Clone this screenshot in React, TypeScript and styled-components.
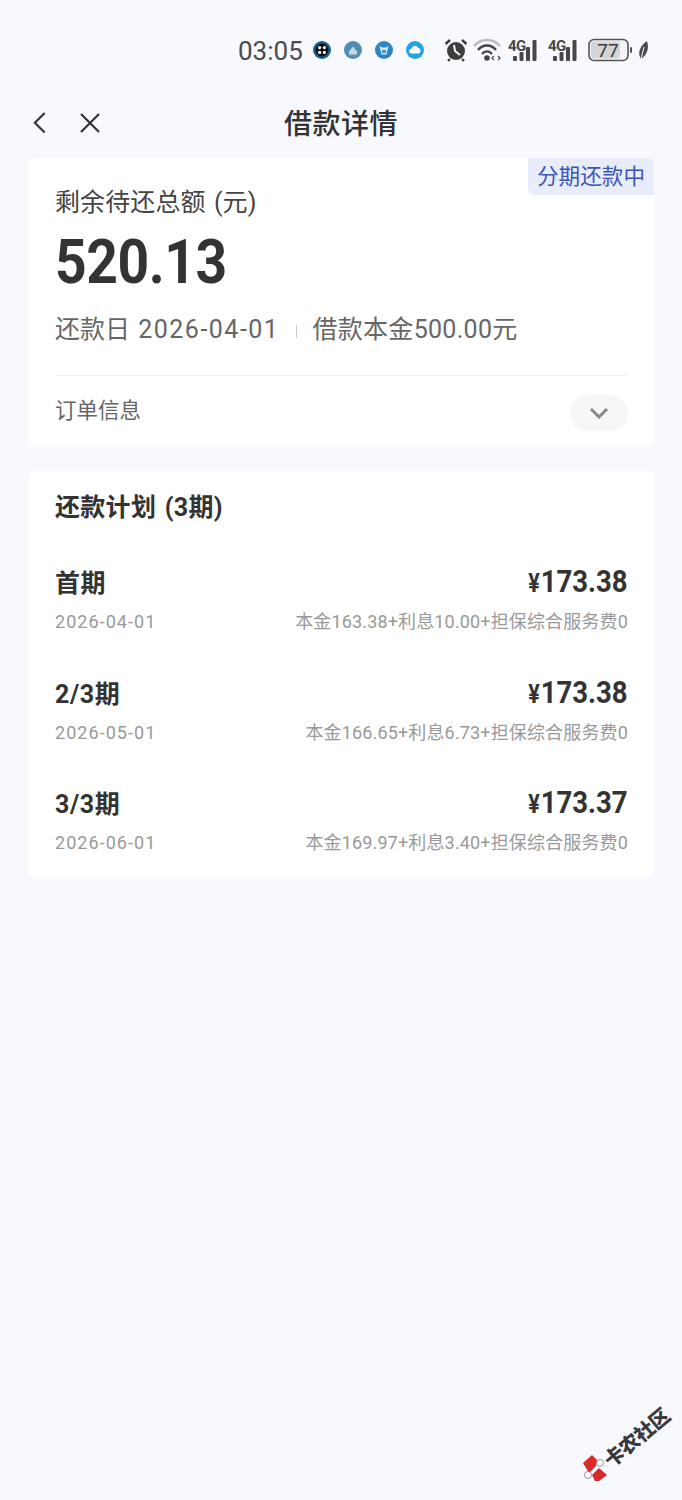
import React from "react";
import styled, { createGlobalStyle } from "styled-components";

const Global = createGlobalStyle`
  html, body { margin: 0; padding: 0; background: #f8f9fe; }
  body { font-family: Roboto, "Noto Sans CJK SC", sans-serif; }
`;

const Page = styled.div`
  position: relative;
  width: 682px;
  height: 1500px;
  overflow: hidden;
  background: #f8f9fe;
  display: flex;
  flex-direction: column;
`;

const StatusBar = styled.div`
  height: 96px;
  box-sizing: border-box;
  padding: 36px 34px 0 238px;
  display: flex;
  align-items: flex-start;
  color: #444;
`;
const Time = styled.span`
  font-size: 26px;
  line-height: 30px;
  color: #4a4a4c;
  width: 75px;
`;
const AppDots = styled.div`
  display: flex;
  gap: 13px;
  margin-top: 5px;
`;
const Spacer = styled.div`
  flex: 1;
`;
const SysIcons = styled.div`
  display: flex;
  align-items: center;
  gap: 5px;
  margin-top: -2px;
`;

const NavBar = styled.div`
  height: 58px;
  padding: 0 28px;
  margin-bottom: 4px;
  display: grid;
  grid-template-columns: 1fr auto 1fr;
  align-items: center;
`;
const NavIcons = styled.div`
  display: flex;
  align-items: center;
  gap: 26px;
  margin-top: -4px;
`;
const Title = styled.h1`
  margin: -6px 0 0;
  font-size: 28px;
  font-weight: 500;
  color: #333;
  letter-spacing: 0.5px;
`;

const Card = styled.section`
  position: relative;
  margin: 0 28px;
  background: #fff;
  border-radius: 6px;
  padding: 0 26px 0 27px;
`;
const SummaryCard = styled(Card)`
  height: 289px;
  box-sizing: border-box;
  padding-top: 29px;
  margin-bottom: 24px;
`;
const PlanCard = styled(Card)`
  height: 406px;
  box-sizing: border-box;
  padding-top: 20px;
`;
const Badge = styled.div`
  position: absolute;
  top: 0;
  right: 0;
  width: 126px;
  height: 37px;
  background: #e9edfb;
  color: #3f55b5;
  font-size: 21.6px;
  line-height: 37px;
  text-align: center;
  border-radius: 0 6px 0 6px;
`;
const Label = styled.div`
  font-size: 25px;
  line-height: 32px;
  color: #444;
  word-spacing: 2px;
  letter-spacing: 0.1px;
`;
const Amount = styled.div`
  font-size: 61px;
  line-height: 70px;
  font-weight: 700;
  color: #333;
  margin-top: 8px;
  letter-spacing: -0.5px;
  transform: scaleX(0.905);
  transform-origin: left center;
`;
const MetaRow = styled.div`
  display: flex;
  align-items: center;
  margin-top: 16px;
  font-size: 25px;
  line-height: 34px;
  color: #666;
`;
const MetaDate = styled.span`
  word-spacing: 2px;
`;
const MetaDigits = styled.span`
  letter-spacing: 1.5px;
`;
const MetaPrincipal = styled.span`
  letter-spacing: 0.3px;
`;
const MetaDivider = styled.span`
  width: 1px;
  height: 13px;
  background: #ccc;
  margin: 3px 15px 0 17px;
`;
const OrderRow = styled.div`
  margin-top: 28px;
  border-top: 1px solid #f0f0f2;
  padding-top: 18px;
  display: flex;
  justify-content: space-between;
  align-items: flex-start;
`;
const OrderLabel = styled.span`
  font-size: 21.5px;
  line-height: 34px;
  color: #666;
`;
const ExpandPill = styled.div`
  width: 58px;
  height: 36px;
  margin-top: 1px;
  border-radius: 18px;
  background: #f7f7f7;
  display: flex;
  align-items: center;
  justify-content: center;
`;

const PlanTitle = styled.h2`
  margin: 0 0 36px;
  font-size: 25px;
  line-height: 34px;
  font-weight: 700;
  color: #333;
  word-spacing: 2px;
  letter-spacing: 0.3px;
`;
const PlanRow = styled.div`
  height: 110.5px;
  display: grid;
  grid-template-columns: auto 1fr;
  grid-template-rows: 47px 36px;
  align-content: start;
`;
const PeriodName = styled.div`
  font-size: 25px;
  font-weight: 700;
  color: #333;
  line-height: 46px;
  letter-spacing: 0.6px;
`;
const PeriodAmount = styled.div`
  text-align: right;
  font-size: 32px;
  font-weight: 700;
  color: #333;
  line-height: 40px;
  transform: scaleX(0.86);
  transform-origin: right center;
`;
const Yen = styled.span`
  font-size: 25px;
  margin-right: 1px;
`;
const PeriodDate = styled.div`
  font-size: 18px;
  line-height: 28px;
  color: #999;
  letter-spacing: 1.05px;
`;
const PeriodDetail = styled.div`
  text-align: right;
  font-size: 18px;
  line-height: 28px;
  color: #999;
  letter-spacing: 0.15px;
`;

const Watermark = styled.div`
  position: absolute;
  left: 576px;
  top: 1404px;
  width: 104px;
  height: 80px;
  pointer-events: none;
`;
const WatermarkText = styled.span`
  position: absolute;
  left: 22px;
  top: 21px;
  font-size: 20px;
  font-weight: 900;
  line-height: 26px;
  color: #3a3a3a;
  white-space: nowrap;
  transform: rotate(-40deg);
  letter-spacing: -0.5px;
`;
const WatermarkLogo = styled.svg`
  position: absolute;
  left: 5px;
  top: 50px;
`;

const AppDot = ({ bg, children }: { bg: string; children: React.ReactNode }) => (
  <svg width="18" height="18" viewBox="0 0 18 18">
    <circle cx="9" cy="9" r="9" fill={bg} />
    {children}
  </svg>
);

const plans = [
  { name: "首期", amount: "173.38", date: "2026-04-01", detail: "本金163.38+利息10.00+担保综合服务费0" },
  { name: "2/3期", amount: "173.38", date: "2026-05-01", detail: "本金166.65+利息6.73+担保综合服务费0" },
  { name: "3/3期", amount: "173.37", date: "2026-06-01", detail: "本金169.97+利息3.40+担保综合服务费0" },
];

const Signal = () => (
  <svg width="35" height="32" viewBox="0 -4 35 32" fill="#474749">
    <text x="0" y="13" fontSize="15" fontWeight="700" letterSpacing="-0.5" fontFamily="Roboto, sans-serif" fill="#474749">4G</text>
    <rect x="5" y="18" width="4" height="5" rx="1" />
    <rect x="11.5" y="14" width="4" height="9" rx="1" />
    <rect x="18" y="9" width="4" height="14" rx="1" />
    <rect x="24.5" y="2" width="4" height="21" rx="1" />
  </svg>
);

export default function App() {
  return (
    <Page>
      <Global />
      <StatusBar>
        <Time>03:05</Time>
        <AppDots>
          <AppDot bg="#14608f">
            <circle cx="9" cy="9" r="6.5" fill="#0c0c14" />
            <circle cx="6.6" cy="6.6" r="1.6" fill="#fff" />
            <circle cx="11.4" cy="6.6" r="1.6" fill="#fff" />
            <circle cx="6.6" cy="11.4" r="1.6" fill="#fff" />
            <circle cx="11.4" cy="11.4" r="1.6" fill="#fff" />
          </AppDot>
          <AppDot bg="#4f8db5">
            <path d="M5 10.5 L9 5.5 L13 10.5 V13 H5 Z" fill="#c5dbe9" />
            <path d="M5 13h8" stroke="#d7c6d8" strokeWidth="1.5" />
          </AppDot>
          <AppDot bg="#2f84c8">
            <path d="M4.5 5 L7 6.5 H11 L13.5 5 L12.5 9 L11.5 13.5 H6.5 L5.5 9 Z" fill="#d7eefc" />
            <path d="M7 9h4v3H7z" fill="#4a92cf" />
          </AppDot>
          <AppDot bg="#25a4e4">
            <path d="M5.5 12.5 a2.4 2.4 0 0 1 0-4.8 a3.6 3.6 0 0 1 6.8-.6 a2.8 2.8 0 0 1 .4 5.4 Z" fill="#fff" />
          </AppDot>
        </AppDots>
        <Spacer />
        <SysIcons>
          <svg width="24" height="24" viewBox="0 0 24 24">
            <circle cx="12" cy="13" r="9" fill="#3d3d3f" />
            <path d="M10 7 L11 13 L16 17" stroke="#f8f9fe" strokeWidth="2" fill="none" />
            <path d="M1.5 6 L6 2 M22.5 6 L18 2 M6 21 L4 23 M18 21 L20 23" stroke="#3d3d3f" strokeWidth="2.4" />
          </svg>
          <svg width="30" height="24" viewBox="0 0 30 24" fill="none">
            <path d="M1 8 C8 0 20 0 27 8" stroke="#bdbdc0" strokeWidth="2.4" />
            <path d="M5 12 C10 6 18 6 23 12" stroke="#444" strokeWidth="2.4" />
            <path d="M9 16 C12 12.5 16 12.5 19 16" stroke="#444" strokeWidth="2.4" />
            <circle cx="14" cy="20" r="2.8" fill="#444" />
            <path d="M21 18 l-2 2 l2 2 M25 18 l2 2 l-2 2" stroke="#555" strokeWidth="1.4" />
          </svg>
          <Signal />
          <Signal />
          <svg width="44" height="24" viewBox="0 0 44 24">
            <rect x="1" y="1.5" width="39" height="21" rx="5" fill="#f4f4f6" stroke="#555" strokeWidth="1.6" />
            <rect x="3" y="3.5" width="29" height="17" rx="3" fill="#d4d4d6" />
            <text x="20" y="19" textAnchor="middle" fontSize="19" fontFamily="Roboto, sans-serif" fill="#3a3a3c">77</text>
            <rect x="42" y="9" width="2" height="6" rx="1" fill="#555" />
          </svg>
          <svg width="11" height="20" viewBox="0 0 11 20">
            <path d="M10 1 C12 7 11 14 4 19 C0 13 3 6 10 1 Z" fill="#4a4a4c" />
            <path d="M7 7 L4 19" stroke="#f8f9fe" strokeWidth="1" />
          </svg>
        </SysIcons>
      </StatusBar>

      <NavBar>
        <NavIcons>
          <svg width="24" height="24" viewBox="0 0 24 24" fill="none" stroke="#333" strokeWidth="2.2">
            <path d="M17 2 L7 12 L17 22" transform="scale(0.98)" />
          </svg>
          <svg width="24" height="24" viewBox="0 0 24 24" fill="none" stroke="#333" strokeWidth="2.2">
            <path d="M3 3 L21 21 M21 3 L3 21" />
          </svg>
        </NavIcons>
        <Title>借款详情</Title>
        <div />
      </NavBar>

      <SummaryCard>
        <Badge>分期还款中</Badge>
        <Label>剩余待还总额 (元)</Label>
        <Amount>520.13</Amount>
        <MetaRow>
          <MetaDate>
            还款日 <MetaDigits>2026-04-01</MetaDigits>
          </MetaDate>
          <MetaDivider />
          <MetaPrincipal>借款本金500.00元</MetaPrincipal>
        </MetaRow>
        <OrderRow>
          <OrderLabel>订单信息</OrderLabel>
          <ExpandPill>
            <svg width="20" height="12" viewBox="0 0 20 12" fill="none" stroke="#8a8a8a" strokeWidth="3">
              <path d="M2 2 L10 10 L18 2" />
            </svg>
          </ExpandPill>
        </OrderRow>
      </SummaryCard>

      <PlanCard>
        <PlanTitle>还款计划 (3期)</PlanTitle>
        {plans.map((p) => (
          <PlanRow key={p.date}>
            <PeriodName>{p.name}</PeriodName>
            <PeriodAmount>
              <Yen>¥</Yen>
              {p.amount}
            </PeriodAmount>
            <PeriodDate>{p.date}</PeriodDate>
            <PeriodDetail>{p.detail}</PeriodDetail>
          </PlanRow>
        ))}
      </PlanCard>

      <Watermark>
        <WatermarkLogo width="28" height="28" viewBox="0 0 28 28">
          <path d="M2 9 L11 1 L16 6 L15 12 L8 19 Z" fill="#d9292b" />
          <path d="M11 21 L18 14 L26 21 L18 27 L14 27 Z" fill="#d9292b" />
          <circle cx="19" cy="9" r="3.5" fill="#fff" stroke="#555" strokeWidth="0.6" />
          <circle cx="7" cy="21" r="3.5" fill="#fff" stroke="#555" strokeWidth="0.6" />
        </WatermarkLogo>
        <WatermarkText>卡农社区</WatermarkText>
      </Watermark>
    </Page>
  );
}
